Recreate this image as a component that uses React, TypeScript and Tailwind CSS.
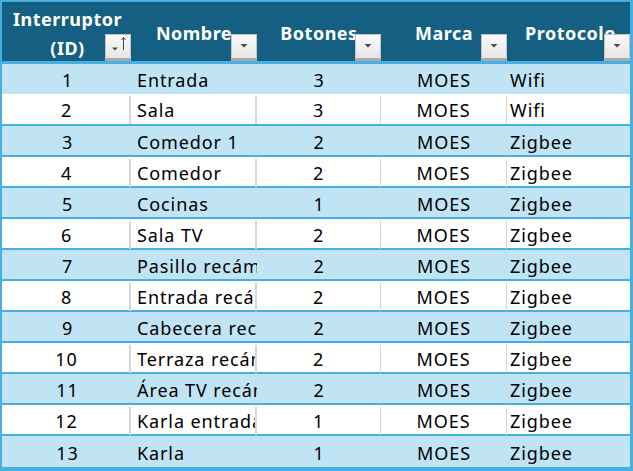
import React from "react";

const rows: [number, string, number, string, string][] = [
  [1, "Entrada", 3, "MOES", "Wifi"],
  [2, "Sala", 3, "MOES", "Wifi"],
  [3, "Comedor 1", 2, "MOES", "Zigbee"],
  [4, "Comedor", 2, "MOES", "Zigbee"],
  [5, "Cocinas", 1, "MOES", "Zigbee"],
  [6, "Sala TV", 2, "MOES", "Zigbee"],
  [7, "Pasillo recámara", 2, "MOES", "Zigbee"],
  [8, "Entrada recámara", 2, "MOES", "Zigbee"],
  [9, "Cabecera recámara", 2, "MOES", "Zigbee"],
  [10, "Terraza recámara", 2, "MOES", "Zigbee"],
  [11, "Área TV recámara", 2, "MOES", "Zigbee"],
  [12, "Karla entrada", 1, "MOES", "Zigbee"],
  [13, "Karla", 1, "MOES", "Zigbee"],
];

function FilterButton({ sorted }: { sorted?: boolean }) {
  return (
    <div className="absolute right-0 bottom-0 w-[26px] h-[27px] border border-[#c4c4c4] border-b-[3px] border-b-[#a9a9a9] bg-gradient-to-b from-[#fbfbfb] to-[#e6e6e6]">
      {sorted ? (
        <svg width="24" height="23" viewBox="0 0 24 23" className="absolute left-0 top-0">
          <path d="M6 12.5 L12 12.5 L9 15.5 Z" fill="#4a4a4a" />
          <path d="M17.5 2.5 L17.5 15" stroke="#4a4a4a" strokeWidth="1" />
          <path d="M15.5 5 L17.5 2.5 L19.5 5" stroke="#4a4a4a" strokeWidth="1" fill="none" />
        </svg>
      ) : (
        <svg width="24" height="23" viewBox="0 0 24 23" className="absolute left-0 top-0">
          <path d="M8.5 9 L15.5 9 L12 12.5 Z" fill="#4a4a4a" />
        </svg>
      )}
    </div>
  );
}

const headerCell =
  "relative flex items-center justify-center text-center text-white font-bold text-[18px] leading-[29px] tracking-[0.5px] pt-[4px] overflow-hidden";

export default function App() {
  return (
    <div className="w-[633px] h-[471px] bg-white border-[#45b0e1] border-l-2 border-t-2 border-r-[3px] border-b-[4px] font-['Noto_Sans',sans-serif] text-black overflow-hidden">
      <div className="grid grid-cols-[129px_126px_124px_126px_123px] h-[59px] bg-[#156082]">
        <div className={headerCell}>
          <span className="whitespace-nowrap pl-[2px]">Interruptor<br />(ID)</span>
          <FilterButton sorted />
        </div>
        <div className={headerCell}>
          <span className="whitespace-nowrap">Nombre</span>
          <FilterButton />
        </div>
        <div className={headerCell}>
          <span className="whitespace-nowrap">Botones</span>
          <FilterButton />
        </div>
        <div className={headerCell}>
          <span className="whitespace-nowrap">Marca</span>
          <FilterButton />
        </div>
        <div className={headerCell}>
          <span className="whitespace-nowrap pl-[4px]">Protocolo</span>
          <FilterButton />
        </div>
      </div>
      <div className="h-[3px] bg-[#45b0e1]" />
      {rows.map(([id, name, btn, brand, proto], i) => {
        const blue = i % 2 === 0;
        const first = i < 2;
        const last = i === rows.length - 1;
        const h = first ? "h-[30px]" : last ? "h-[31px]" : "h-[29px]";
        const sep = blue ? "" : "border-r-2 border-[#d6d6d6]";
        const sep1 = blue ? "" : "border-r border-[#d6d6d6]";
        return (
          <div key={id}>
            {!first && <div className="h-[2px] bg-[#45b0e1]" />}
            <div
              className={`grid grid-cols-[129px_126px_124px_126px_123px] ${h} ${
                blue ? "bg-[#c1e4f5]" : "bg-white"
              } text-[18px] leading-[28px] tracking-[0.9px] pt-[2px]`}
            >
              <div className={`flex items-center justify-center pl-[2px] ${sep}`}>{id}</div>
              <div className={`flex items-center pl-[6px] overflow-hidden whitespace-nowrap ${sep}`}>{name}</div>
              <div className={`flex items-center justify-center ${sep1}`}>{btn}</div>
              <div className={`flex items-center justify-center ${sep1}`}>{brand}</div>
              <div className="flex items-center pl-[3px] whitespace-nowrap overflow-hidden">{proto}</div>
            </div>
          </div>
        );
      })}
    </div>
  );
}
